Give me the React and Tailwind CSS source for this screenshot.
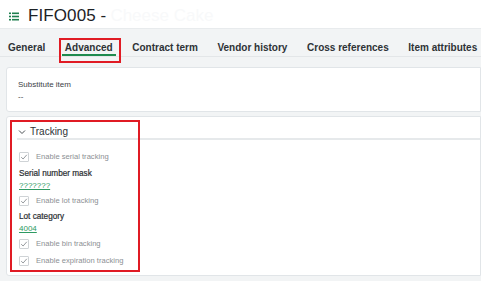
import React from "react";

const font = { fontFamily: '"Liberation Sans", Arial, sans-serif' };

function Check({ label }) {
  return (
    <div className="flex items-center h-[17px] pl-[12px]">
      <div className="w-[10px] h-[10px] border border-[#cfd3d6] rounded-[1px] bg-white flex items-center justify-center">
        <svg width="8" height="8" viewBox="0 0 8 8">
          <path d="M1.2 4.2 L3.1 6 L6.8 1.8" fill="none" stroke="#8a8f93" strokeWidth="0.9" />
        </svg>
      </div>
      <span className="ml-[7px] text-[7.6px] text-[#8c9094]">{label}</span>
    </div>
  );
}

export default function App() {
  const tabs = ["General", "Advanced", "Contract term", "Vendor history", "Cross references", "Item attributes"];
  return (
    <div style={font} className="w-[481px] h-[281px] overflow-hidden bg-[#f2f4f5]">
      <div className="h-[29px] bg-white border-b border-[#e8ebed] flex items-center pl-[9px] pt-[3px]">
        <svg width="10" height="9" viewBox="0 0 10 9" className="mr-[9px] mt-[1px]">
          <rect x="0" y="0.5" width="2" height="1.6" fill="#1e7f4f" />
          <rect x="3" y="0.5" width="7" height="1.6" fill="#1e7f4f" />
          <rect x="0" y="3.7" width="2" height="1.6" fill="#1e7f4f" />
          <rect x="3" y="3.7" width="7" height="1.6" fill="#1e7f4f" />
          <rect x="0" y="6.9" width="2" height="1.6" fill="#1e7f4f" />
          <rect x="3" y="6.9" width="7" height="1.6" fill="#1e7f4f" />
        </svg>
        <span className="text-[17px] text-[#1d2226] font-medium tracking-[0.1px]">FIFO005 -</span>
        <span className="ml-[4px] text-[17px] text-[#f8f9fa]">Cheese Cake</span>
      </div>
      <div className="h-[28px] flex items-end pb-[2px] pl-[8px] gap-[19.6px] border-b border-[#e3e6e8]">
        {tabs.map((t) => (
          <div key={t} className="relative flex items-end">
            <span className="text-[10px] leading-[12px] font-bold text-[#2e3236] whitespace-nowrap">{t}</span>
            {t === "Advanced" && (
              <>
                <div className="absolute left-[-3px] right-[-3px] top-[12px] h-[2px] bg-[#1e8a4e]" />
                <div className="absolute left-[-6px] right-[-8px] top-[-4px] h-[25px] border-2 border-[#e01b24]" />
              </>
            )}
          </div>
        ))}
      </div>
      <div className="mt-[10px] ml-[6px] h-[45px] bg-white border border-[#e1e5e8] rounded-l-[3px] pl-[11px] pt-[11px]">
        <div className="text-[8px] text-[#3c4246]">Substitute item</div>
        <div className="text-[8px] text-[#3c4246]">--</div>
      </div>
      <div className="relative mt-[4px] ml-[6px] h-[160px] bg-white border border-[#e1e5e8] rounded-l-[3px] pt-[8px]">
        <div className="ml-[10px] h-[15px] flex items-center border-b-2 border-[#e6e9eb]">
          <svg width="8" height="6" viewBox="0 0 8 6" className="ml-[1px] mr-[4px] mt-[1px]">
            <path d="M1 1.5 L4 4.5 L7 1.5" fill="none" stroke="#4a4f53" strokeWidth="1" />
          </svg>
          <span className="text-[10px] text-[#2e3236]">Tracking</span>
        </div>
        <div className="pt-[8px]">
          <Check label="Enable serial tracking" />
          <div className="pl-[12px] h-[15px] flex items-end text-[8.2px] text-[#2a2e31]" style={{ WebkitTextStroke: "0.2px #2a2e31" }}>Serial number mask</div>
          <div className="pl-[12px] h-[12px] flex items-center text-[8px] text-[#2e9a62] underline">???????</div>
          <Check label="Enable lot tracking" />
          <div className="pl-[12px] h-[14px] flex items-end text-[8.2px] text-[#2a2e31]" style={{ WebkitTextStroke: "0.2px #2a2e31" }}>Lot category</div>
          <div className="pl-[12px] h-[12px] flex items-center text-[8px] text-[#2e9a62] underline">4004</div>
          <Check label="Enable bin tracking" />
          <Check label="Enable expiration tracking" />
        </div>
        <div className="absolute left-[3px] top-[3px] w-[130px] h-[152px] border-2 border-[#e01b24]" />
      </div>
    </div>
  );
}
